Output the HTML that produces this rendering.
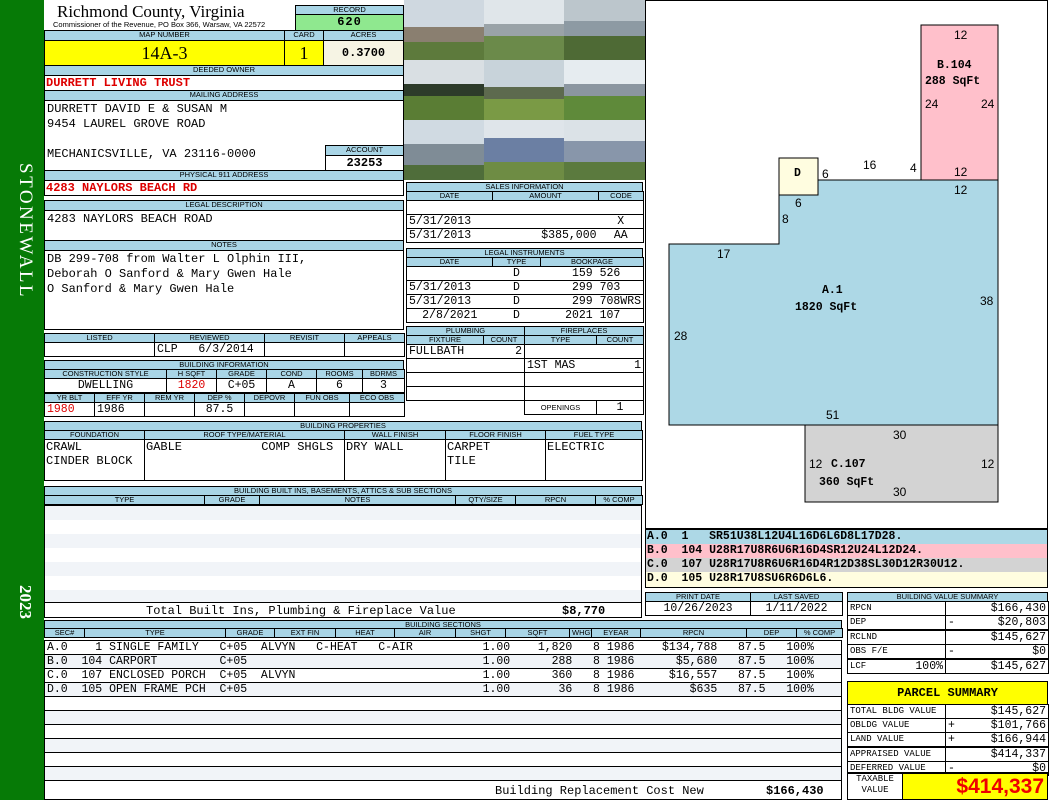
<!DOCTYPE html>
<html><head><meta charset="utf-8"><style>
*{margin:0;padding:0}
body{width:1050px;height:800px;position:relative;background:#fff;overflow:hidden;font-family:"Liberation Mono",monospace;font-size:12px;color:#000}
.a{position:absolute;box-sizing:border-box;white-space:nowrap}
.hd{position:absolute;box-sizing:border-box;background:#a9d5e6;border:1px solid #000;font:7.5px/8px "Liberation Sans",sans-serif;text-align:center;overflow:hidden;white-space:nowrap}
.bx{position:absolute;box-sizing:border-box;border:1px solid #000;background:#fff}
.m{font-family:"Liberation Mono",monospace;font-size:12px;line-height:14px}
.r{color:#d00;font-weight:bold}
table{border-collapse:collapse;table-layout:fixed;position:absolute}
td{border:1px solid #000;padding:0 2px;overflow:hidden;white-space:nowrap}
.th td{background:#a9d5e6;font:7.5px/8px "Liberation Sans",sans-serif;text-align:center;height:8px}
.tr td{font:11.5px/13px "Liberation Mono",monospace;height:13px}
.ps td{height:13px;line-height:13px}
.rt{text-align:right}.ct{text-align:center}
.cd div{height:14px;padding-left:1px}
</style></head><body>
<!-- sidebar -->
<div class="a" style="left:0;top:0;width:44px;height:800px;background:#067a06"></div>
<div class="a" style="left:8px;top:163px;width:28px;height:155px;color:#fff;font:19px 'Liberation Serif',serif;writing-mode:vertical-rl;letter-spacing:2.5px">STONEWALL</div>
<div class="a" style="left:9px;top:585px;width:26px;height:45px;color:#fff;font:bold 17px 'Liberation Serif',serif;writing-mode:vertical-rl">2023</div>

<!-- title -->
<div class="a" style="left:57px;top:2px;font:17px 'Liberation Serif',serif">Richmond County, Virginia</div>
<div class="a" style="left:53px;top:20px;font:7.5px 'Liberation Sans',sans-serif">Commissioner of the Revenue, PO Box 366, Warsaw, VA 22572</div>
<div class="hd" style="left:295px;top:5px;width:109px;height:10px">RECORD</div>
<div class="a" style="left:295px;top:14px;width:109px;height:17px;background:#8fe88f;border:1px solid #000;text-align:center;font:bold 12px/15px 'Liberation Mono';letter-spacing:1px">620</div>
<div class="hd" style="left:44px;top:30px;width:241px;height:11px">MAP NUMBER</div>
<div class="hd" style="left:284px;top:30px;width:40px;height:11px">CARD</div>
<div class="hd" style="left:323px;top:30px;width:81px;height:11px">ACRES</div>
<div class="a" style="left:44px;top:40px;width:241px;height:26px;background:#ffff00;border:1px solid #000;text-align:center;font:18px/24px 'Liberation Serif',serif">14A-3</div>
<div class="a" style="left:284px;top:40px;width:40px;height:26px;background:#ffff00;border:1px solid #000;text-align:center;font:18px/24px 'Liberation Serif',serif">1</div>
<div class="a" style="left:323px;top:40px;width:81px;height:26px;background:#f6f4e4;border:1px solid #000;text-align:center;font:bold 12px/24px 'Liberation Mono'">0.3700</div>
<div class="hd" style="left:44px;top:65px;width:360px;height:11px">DEEDED OWNER</div>
<div class="bx" style="left:44px;top:75px;width:360px;height:16px"></div>
<div class="a m r" style="left:46px;top:76px">DURRETT LIVING TRUST</div>
<div class="hd" style="left:44px;top:90px;width:360px;height:11px">MAILING ADDRESS</div>
<div class="bx" style="left:44px;top:100px;width:360px;height:71px"></div>
<div class="a m" style="left:47px;top:102px;line-height:15px">DURRETT DAVID E &amp; SUSAN M<br>9454 LAUREL GROVE ROAD<br><br>MECHANICSVILLE, VA 23116-0000</div>
<div class="hd" style="left:325px;top:145px;width:79px;height:11px">ACCOUNT</div>
<div class="bx" style="left:325px;top:155px;width:79px;height:16px"></div>
<div class="a m" style="left:325px;top:156px;width:79px;text-align:center;font-weight:bold">23253</div>
<div class="hd" style="left:44px;top:170px;width:360px;height:11px">PHYSICAL 911 ADDRESS</div>
<div class="bx" style="left:44px;top:180px;width:360px;height:16px"></div>
<div class="a m r" style="left:46px;top:181px">4283 NAYLORS BEACH RD</div>
<div class="hd" style="left:44px;top:200px;width:360px;height:11px">LEGAL DESCRIPTION</div>
<div class="bx" style="left:44px;top:210px;width:360px;height:31px"></div>
<div class="a m" style="left:47px;top:212px">4283 NAYLORS BEACH ROAD</div>
<div class="hd" style="left:44px;top:240px;width:360px;height:11px">NOTES</div>
<div class="bx" style="left:44px;top:250px;width:360px;height:80px"></div>
<div class="a m" style="left:47px;top:252px;line-height:15px">DB 299-708 from Walter L Olphin III,<br>Deborah O Sanford &amp; Mary Gwen Hale<br>O Sanford &amp; Mary Gwen Hale</div>

<!-- listed -->
<table style="left:44px;top:333px;width:360px">
<colgroup><col style="width:110px"><col style="width:110px"><col style="width:80px"><col style="width:60px"></colgroup>
<tr class="th"><td>LISTED</td><td>REVIEWED</td><td>REVISIT</td><td>APPEALS</td></tr>
<tr class="tr"><td></td><td>CLP&nbsp;&nbsp;&nbsp;6/3/2014</td><td></td><td></td></tr>
</table>
<div class="hd" style="left:44px;top:360px;width:360px;height:10px">BUILDING INFORMATION</div>
<table style="left:44px;top:369px;width:360px">
<colgroup><col style="width:122px"><col style="width:50px"><col style="width:50px"><col style="width:50px"><col style="width:46px"><col style="width:42px"></colgroup>
<tr class="th"><td>CONSTRUCTION STYLE</td><td>H SQFT</td><td>GRADE</td><td>COND</td><td>ROOMS</td><td>BDRMS</td></tr>
<tr class="tr"><td class="ct">DWELLING</td><td class="ct r">1820</td><td class="ct">C+05</td><td class="ct">A</td><td class="ct">6</td><td class="ct">3</td></tr>
</table>
<table style="left:44px;top:393px;width:360px">
<colgroup><col style="width:50px"><col style="width:50px"><col style="width:50px"><col style="width:50px"><col style="width:50px"><col style="width:55px"><col style="width:55px"></colgroup>
<tr class="th"><td>YR BLT</td><td>EFF YR</td><td>REM YR</td><td>DEP %</td><td>DEPOVR</td><td>FUN OBS</td><td>ECO OBS</td></tr>
<tr class="tr"><td class="r">1980</td><td>1986</td><td></td><td class="ct">87.5</td><td></td><td></td><td></td></tr>
</table>

<!-- photos -->
<div class="a" style="left:404px;top:0;width:241px;height:180px;display:grid;grid-template-columns:80px 80px 81px;grid-template-rows:60px 60px 60px">
<div style="background:linear-gradient(#cfd8e0 0 45%,#8a7f70 45% 70%,#5d7a3c 70%)"></div>
<div style="background:linear-gradient(#e0e6ea 0 40%,#9aa3a8 40% 60%,#6b8a4a 60%)"></div>
<div style="background:linear-gradient(#bcc6cc 0 35%,#8d9aa3 35% 60%,#4e6a35 60%)"></div>
<div style="background:linear-gradient(#d9dfe3 0 40%,#2d3b2a 40% 60%,#5a7d34 60%)"></div>
<div style="background:linear-gradient(#c8d3da 0 45%,#5d6a4e 45% 65%,#7a9a45 65%)"></div>
<div style="background:linear-gradient(#e6ecf0 0 40%,#8b96a0 40% 60%,#5f8a3a 60%)"></div>
<div style="background:linear-gradient(#d0dae2 0 40%,#7f8c96 40% 75%,#4f6d3a 75%)"></div>
<div style="background:linear-gradient(#dfe5ea 0 30%,#6b7fa3 30% 70%,#6e8c44 70%)"></div>
<div style="background:linear-gradient(#dbe2e7 0 35%,#8896aa 35% 70%,#5b7a3e 70%)"></div>
</div>

<!-- sales -->
<div class="hd" style="left:406px;top:182px;width:237px;height:10px">SALES INFORMATION</div>
<table style="left:406px;top:191px;width:237px">
<colgroup><col style="width:86px"><col style="width:106px"><col style="width:45px"></colgroup>
<tr class="th"><td>DATE</td><td>AMOUNT</td><td>CODE</td></tr>
<tr class="tr"><td style="border-right:0"></td><td style="border-left:0;border-right:0"></td><td style="border-left:0"></td></tr>
<tr class="tr"><td style="border-right:0">5/31/2013</td><td style="border-left:0;border-right:0"></td><td class="ct" style="border-left:0">X</td></tr>
<tr class="tr"><td style="border-right:0">5/31/2013</td><td class="rt" style="border-left:0;border-right:0">$385,000</td><td class="ct" style="border-left:0">AA</td></tr>
</table>
<div class="hd" style="left:406px;top:248px;width:237px;height:10px">LEGAL INSTRUMENTS</div>
<table style="left:406px;top:257px;width:237px">
<colgroup><col style="width:86px"><col style="width:48px"><col style="width:103px"></colgroup>
<tr class="th"><td>DATE</td><td>TYPE</td><td>BOOKPAGE</td></tr>
<tr class="tr"><td style="border-right:0"></td><td class="ct" style="border-left:0;border-right:0">D</td><td class="rt" style="border-left:0">159 526&nbsp;&nbsp;&nbsp;</td></tr>
<tr class="tr"><td style="border-right:0">5/31/2013</td><td class="ct" style="border-left:0;border-right:0">D</td><td class="rt" style="border-left:0">299 703&nbsp;&nbsp;&nbsp;</td></tr>
<tr class="tr"><td style="border-right:0">5/31/2013</td><td class="ct" style="border-left:0;border-right:0">D</td><td class="rt" style="border-left:0">299 708WRS</td></tr>
<tr class="tr"><td class="ct" style="border-right:0">2/8/2021</td><td class="ct" style="border-left:0;border-right:0">D</td><td class="rt" style="border-left:0">2021 107&nbsp;&nbsp;&nbsp;</td></tr>
</table>

<!-- plumbing -->
<table style="left:406px;top:326px;width:118px">
<colgroup><col style="width:77px"><col style="width:41px"></colgroup>
<tr class="th"><td colspan="2">PLUMBING</td></tr>
<tr class="th"><td>FIXTURE</td><td>COUNT</td></tr>
<tr class="tr"><td style="border-right:0">FULLBATH</td><td class="rt" style="border-left:0">2</td></tr>
<tr class="tr"><td colspan="2"></td></tr>
<tr class="tr"><td colspan="2"></td></tr>
<tr class="tr"><td colspan="2"></td></tr>
</table>
<table style="left:524px;top:326px;width:119px">
<colgroup><col style="width:72px"><col style="width:47px"></colgroup>
<tr class="th"><td colspan="2">FIREPLACES</td></tr>
<tr class="th"><td>TYPE</td><td>COUNT</td></tr>
<tr class="tr"><td colspan="2"></td></tr>
<tr class="tr"><td style="border-right:0">1ST MAS</td><td class="rt" style="border-left:0">1</td></tr>
<tr class="tr"><td colspan="2"></td></tr>
<tr class="tr"><td colspan="2"></td></tr>
<tr class="tr"><td style="font:7.5px 'Liberation Sans';text-align:center">OPENINGS</td><td class="ct">1</td></tr>
</table>

<!-- building properties -->
<div class="hd" style="left:44px;top:421px;width:598px;height:10px">BUILDING PROPERTIES</div>
<table style="left:44px;top:430px;width:598px">
<colgroup><col style="width:100px"><col style="width:200px"><col style="width:101px"><col style="width:100px"><col style="width:97px"></colgroup>
<tr class="th"><td>FOUNDATION</td><td>ROOF TYPE/MATERIAL</td><td>WALL FINISH</td><td>FLOOR FINISH</td><td>FUEL TYPE</td></tr>
<tr><td class="m" style="height:40px;vertical-align:top;padding:0 1px">CRAWL<br>CINDER BLOCK</td><td class="m" style="vertical-align:top;padding:0 1px">GABLE&nbsp;&nbsp;&nbsp;&nbsp;&nbsp;&nbsp;&nbsp;&nbsp;&nbsp;&nbsp;&nbsp;COMP SHGLS</td><td class="m" style="vertical-align:top;padding:0 1px">DRY WALL</td><td class="m" style="vertical-align:top;padding:0 1px">CARPET<br>TILE</td><td class="m" style="vertical-align:top;padding:0 1px">ELECTRIC</td></tr>
</table>

<!-- built ins -->
<div class="hd" style="left:44px;top:486px;width:598px;height:10px">BUILDING BUILT INS, BASEMENTS, ATTICS &amp; SUB SECTIONS</div>
<table style="left:44px;top:495px;width:598px">
<colgroup><col style="width:160px"><col style="width:55px"><col style="width:196px"><col style="width:60px"><col style="width:80px"><col style="width:47px"></colgroup>
<tr class="th"><td>TYPE</td><td>GRADE</td><td>NOTES</td><td>QTY/SIZE</td><td>RPCN</td><td>% COMP</td></tr>
</table>
<div class="bx" style="left:44px;top:505px;width:598px;height:98px;background:repeating-linear-gradient(#f1f4f8 0 14px,#fff 14px 28px)"></div>
<div class="bx" style="left:44px;top:602px;width:598px;height:16px"></div>
<div class="a m" style="left:146px;top:604px">Total Built Ins, Plumbing &amp; Fireplace Value</div>
<div class="a m" style="left:562px;top:604px;font-weight:bold">$8,770</div>

<!-- building sections -->
<div class="hd" style="left:44px;top:620px;width:798px;height:9px">BUILDING SECTIONS</div>
<table style="left:44px;top:628px;width:798px">
<colgroup><col style="width:40px"><col style="width:141px"><col style="width:49px"><col style="width:61px"><col style="width:59px"><col style="width:61px"><col style="width:50px"><col style="width:64px"><col style="width:22px"><col style="width:49px"><col style="width:106px"><col style="width:50px"><col style="width:46px"></colgroup>
<tr class="th"><td>SEC#</td><td>TYPE</td><td>GRADE</td><td>EXT FIN</td><td>HEAT</td><td>AIR</td><td>SHGT</td><td>SQFT</td><td>WHGT</td><td>EYEAR</td><td>RPCN</td><td>DEP</td><td>% COMP</td></tr>
</table>
<div class="bx" style="left:44px;top:640px;width:798px;height:160px;background:repeating-linear-gradient(#fff 0 13px,#000 13px 14px,#f1f4f8 14px 27px,#000 27px 28px)"></div>
<div class="a m" style="left:47px;top:641px;font-size:11.5px;line-height:14px;white-space:pre">A.0    1 SINGLE FAMILY   C+05  ALVYN   C-HEAT   C-AIR
B.0  104 CARPORT         C+05
C.0  107 ENCLOSED PORCH  C+05  ALVYN
D.0  105 OPEN FRAME PCH  C+05</div>
<div class="a m" style="left:455px;top:641px;width:387px;font-size:11.5px;line-height:14px;white-space:pre">    1.00    1,820   8 1986    $134,788   87.5   100%
    1.00      288   8 1986      $5,680   87.5   100%
    1.00      360   8 1986     $16,557   87.5   100%
    1.00       36   8 1986        $635   87.5   100%</div>
<div class="a" style="left:45px;top:781px;width:796px;height:18px;background:#fff"></div>
<div class="a m" style="left:495px;top:784px">Building Replacement Cost New</div>
<div class="a m" style="left:766px;top:784px;font-weight:bold">$166,430</div>

<!-- sketch -->
<div class="bx" style="left:645px;top:0;width:403px;height:529px"></div>
<svg class="a" style="left:0;top:0" width="1050" height="529">
<polygon points="669,244 779,244 779,180 998,180 998,425 669,425" fill="#add8e6" stroke="#000"/>
<rect x="921" y="25" width="77" height="155" fill="#ffc0cb" stroke="#000"/>
<rect x="805" y="425" width="193" height="77" fill="#d3d3d3" stroke="#000"/>
<rect x="779" y="158" width="39" height="37" fill="#fffde0" stroke="#000"/>
<g font-family="Liberation Sans" font-size="12">
<text x="954" y="39">12</text><text x="925" y="108">24</text><text x="981" y="108">24</text><text x="954" y="176">12</text><text x="954" y="194">12</text>
<text x="863" y="169">16</text><text x="910" y="172">4</text><text x="822" y="178">6</text><text x="795" y="207">6</text><text x="782" y="223">8</text>
<text x="717" y="258">17</text><text x="674" y="340">28</text><text x="980" y="305">38</text><text x="826" y="419">51</text>
<text x="893" y="439">30</text><text x="809" y="468">12</text><text x="981" y="468">12</text><text x="893" y="496">30</text>
</g>
<g font-family="Liberation Mono" font-size="11.5" font-weight="bold">
<text x="937" y="68">B.104</text><text x="925" y="84">288 SqFt</text>
<text x="794" y="176">D</text>
<text x="822" y="293">A.1</text><text x="795" y="310">1820 SqFt</text>
<text x="831" y="467">C.107</text><text x="819" y="485">360 SqFt</text>
</g>
</svg>

<!-- codes -->
<div class="a cd" style="left:645px;top:529px;width:403px;height:59px;border:1px solid #000;font:bold 11.5px/14px 'Liberation Mono';white-space:pre;overflow:hidden"><div style="background:#add8e6">A.0  1   SR51U38L12U4L16D6L6D8L17D28.</div><div style="background:#ffc0cb">B.0  104 U28R17U8R6U6R16D4SR12U24L12D24.</div><div style="background:#d3d3d3">C.0  107 U28R17U8R6U6R16D4R12D38SL30D12R30U12.</div><div style="background:#fffde0;height:15px">D.0  105 U28R17U8SU6R6D6L6.</div></div>

<!-- print date -->
<table style="left:645px;top:592px;width:197px">
<colgroup><col style="width:105px"><col style="width:92px"></colgroup>
<tr class="th"><td>PRINT DATE</td><td>LAST SAVED</td></tr>
<tr class="tr"><td class="ct">10/26/2023</td><td class="ct">1/11/2022</td></tr>
</table>

<!-- value summary -->
<div class="hd" style="left:847px;top:592px;width:201px;height:10px">BUILDING VALUE SUMMARY</div>
<table style="left:847px;top:601px;width:201px">
<colgroup><col style="width:98px"><col style="width:103px"></colgroup>
<tr class="tr ps"><td style="font-size:9px">RPCN</td><td class="rt">$166,430</td></tr>
<tr class="tr ps"><td style="font-size:9px">DEP</td><td class="rt"><span style="float:left">-</span>$20,803</td></tr>
<tr class="tr ps"><td style="font-size:9px;border-top:2px solid #000">RCLND</td><td class="rt" style="border-top:2px solid #000">$145,627</td></tr>
<tr class="tr ps"><td style="font-size:9px">OBS F/E</td><td class="rt"><span style="float:left">-</span>$0</td></tr>
<tr class="tr ps"><td style="font-size:9px;border-top:2px solid #000">LCF<span style="float:right;font-size:11.5px">100%</span></td><td class="rt" style="border-top:2px solid #000">$145,627</td></tr>
</table>
<div class="a" style="left:847px;top:681px;width:201px;height:24px;background:#ffff00;border:1px solid #000;text-align:center;font:bold 12px/22px 'Liberation Mono'">PARCEL SUMMARY</div>
<table style="left:847px;top:704px;width:201px">
<colgroup><col style="width:98px"><col style="width:103px"></colgroup>
<tr class="tr ps"><td style="font-size:9px">TOTAL BLDG VALUE</td><td class="rt">$145,627</td></tr>
<tr class="tr ps"><td style="font-size:9px">OBLDG VALUE</td><td class="rt"><span style="float:left">+</span>$101,766</td></tr>
<tr class="tr ps"><td style="font-size:9px">LAND VALUE</td><td class="rt"><span style="float:left">+</span>$166,944</td></tr>
<tr class="tr ps"><td style="font-size:9px;border-top:2px solid #000">APPRAISED VALUE</td><td class="rt" style="border-top:2px solid #000">$414,337</td></tr>
<tr class="tr ps"><td style="font-size:9px">DEFERRED VALUE</td><td class="rt"><span style="float:left">-</span>$0</td></tr>
</table>
<div class="bx" style="left:847px;top:772px;width:56px;height:28px;border-top:2px solid #000"></div>
<div class="a" style="left:847px;top:774px;width:56px;text-align:center;font:9px/11px 'Liberation Mono'">TAXABLE<br>VALUE</div>
<div class="a" style="left:902px;top:772px;width:146px;height:28px;background:#ffff00;border:1px solid #000;border-top:2px solid #000;text-align:right;padding-right:3px;color:#e00;font:bold 21px/25px 'Liberation Sans',sans-serif">$414,337</div>
</body></html>
